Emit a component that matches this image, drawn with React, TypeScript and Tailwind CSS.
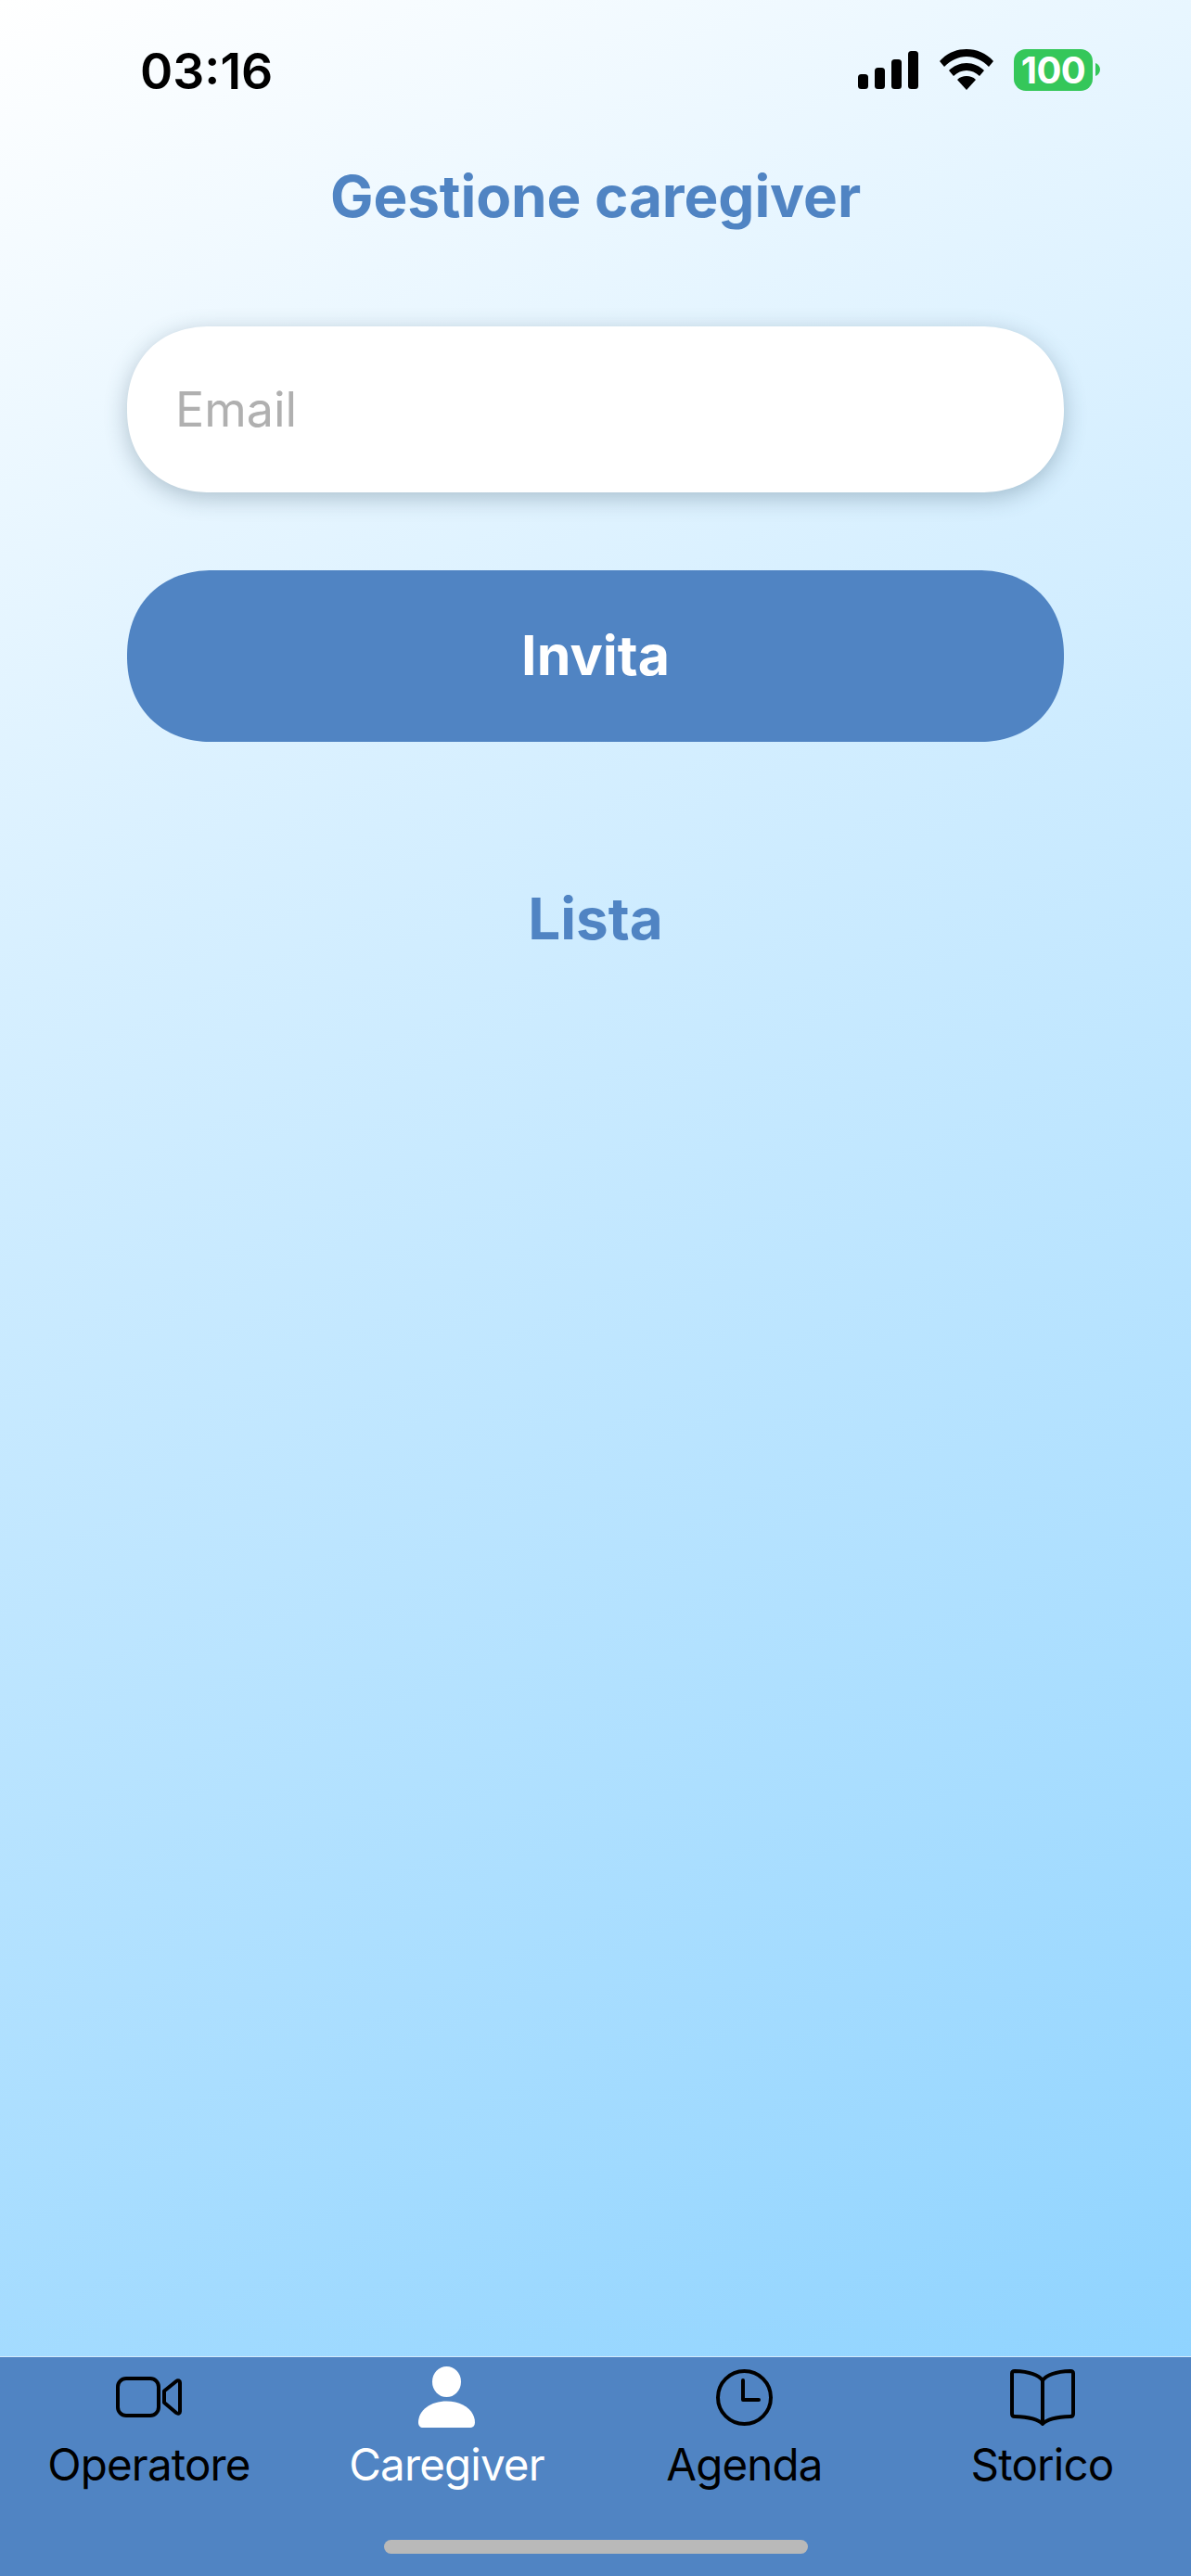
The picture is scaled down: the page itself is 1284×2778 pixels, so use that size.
import React from "react";

const font = { fontFamily: "Inter, 'Liberation Sans', sans-serif" };

function Tab({ label, active, children }: { label: string; active?: boolean; children: React.ReactNode }) {
  return (
    <div className="flex flex-1 flex-col items-center">
      <div className="flex h-[66px] w-full items-center justify-center">{children}</div>
      <div className={`mt-[12px] text-[47.5px] leading-[56px] tracking-[-0.85px] ${active ? "text-white" : "text-black"}`}>{label}</div>
    </div>
  );
}

export default function App() {
  return (
    <div
      style={font}
      className="flex h-[2778px] w-[1284px] flex-col overflow-hidden bg-[linear-gradient(155deg,#ffffff_0%,#d6efff_32%,#8ed3ff_94%)]"
    >
      {/* Status bar */}
      <div className="flex h-[152px] shrink-0 items-start justify-between pl-[151px] pr-[97px] pt-[42px]">
        <div className="text-[53.5px] font-semibold leading-[70px] text-black">03:16</div>
        <div className="mt-[11px] flex items-start">
          <svg width="66" height="42" viewBox="0 0 66 42" className="mt-[2px]">
            <rect x="0" y="25" width="11" height="16" rx="3.5" fill="#000" />
            <rect x="18" y="18" width="11" height="23" rx="3.5" fill="#000" />
            <rect x="36" y="9" width="11" height="32" rx="3.5" fill="#000" />
            <rect x="54" y="0" width="11" height="41" rx="3.5" fill="#000" />
          </svg>
          <svg width="58" height="44" viewBox="0 0 58 44" className="ml-[22px]">
            <path d="M29 0C18 0 8 4 0 13l5 6C12 12 20 8 29 8s17 4 24 11l5-6C50 4 40 0 29 0Z" fill="#000" />
            <path d="M29 15c-7 0-14 3-19 8l5 6c4-4 9-6 14-6s10 2 14 6l5-6c-5-5-12-8-19-8Z" fill="#000" />
            <path d="M29 29c-4 0-7 1-10 4l10 11 10-11c-3-3-6-4-10-4Z" fill="#000" />
          </svg>
          <div className="ml-[22px] flex h-[45px] w-[85px] items-center justify-center rounded-[13px] bg-[#35c75a] text-[40px] font-bold leading-none tracking-[-0.5px] text-white">
            100
          </div>
          <svg width="6" height="14" viewBox="0 0 6 14" className="ml-[3px] mt-[15px]">
            <path d="M0 0c3 1 5 4 5 7s-2 6-5 7Z" fill="#35c75a" />
          </svg>
        </div>
      </div>

      {/* Content */}
      <main className="flex flex-1 flex-col items-center">
        <h1 className="mt-[30px] text-[62px] font-bold leading-[60px] tracking-[-0.1px] text-[#5084c3]">Gestione caregiver</h1>
        <div className="mt-[110px] flex h-[179px] w-[1010px] items-center rounded-[89px] bg-white pl-[52px] text-[52px] text-[#b0b0b0] shadow-[0_6px_24px_rgba(50,80,100,0.32)] [corner-shape:superellipse(1.12)]">
          Email
        </div>
        <button className="mt-[84px] flex h-[185px] w-[1010px] items-center justify-center rounded-[92px] bg-[#5084c3] text-[59px] font-bold text-white [corner-shape:superellipse(1.12)]">
          Invita
        </button>
        <h2 className="mt-[155px] text-[62px] font-bold leading-[72px] text-[#5084c3]">Lista</h2>
      </main>

      {/* Tab bar */}
      <nav className="relative flex h-[237px] shrink-0 items-start border-t border-[#d4eafb] bg-[#5084c3] pt-[10px]">
        <Tab label="Operatore">
          <svg width="71" height="44" viewBox="0 0 71 44" fill="none" stroke="#000" strokeWidth="4" strokeLinejoin="round">
            <rect x="2" y="2" width="44" height="40" rx="9" />
            <path d="M65 5 52 15.500v12.500L65 39c2 1.500 4 .5 4-1.500V6.500C69 4.500 67 3.500 65 5Z" />
          </svg>
        </Tab>
        <Tab label="Caregiver" active>
          <svg width="61" height="66" viewBox="0 0 61 66" fill="#fff">
            <ellipse cx="30.500" cy="16.500" rx="15.500" ry="16.500" />
            <path d="M30.500 37.500C13.500 37.500 0 47 0 60.500 0 64 2 66 5 66h51c3 0 5-2 5-5.500C61 47 47.500 37.500 30.500 37.500Z" />
          </svg>
        </Tab>
        <Tab label="Agenda">
          <svg width="61" height="61" viewBox="0 0 61 61" fill="none" stroke="#000" strokeWidth="4" strokeLinecap="round" strokeLinejoin="round">
            <circle cx="30.500" cy="30.500" r="28.500" />
            <path d="M29 12v21h17" />
          </svg>
        </Tab>
        <Tab label="Storico">
          <svg width="70" height="61" viewBox="0 0 70 61" fill="none" stroke="#000" strokeWidth="4" strokeLinejoin="round">
            <path d="M35 12C30 5 19 2.500 5 2 3 2 2 3 2 4.500V48c0 2 1 3 3 3 14 .5 25 2.500 30 8 5-5.500 16-7.500 30-8 2 0 3-1 3-3V4.500C68 3 67 2 65 2 51 2.500 40 5 35 12Zm0 0v47" />
          </svg>
        </Tab>
        <div className="absolute left-[414px] top-[197px] h-[15px] w-[457px] rounded-full bg-[#b9b9b9]" />
      </nav>
    </div>
  );
}
